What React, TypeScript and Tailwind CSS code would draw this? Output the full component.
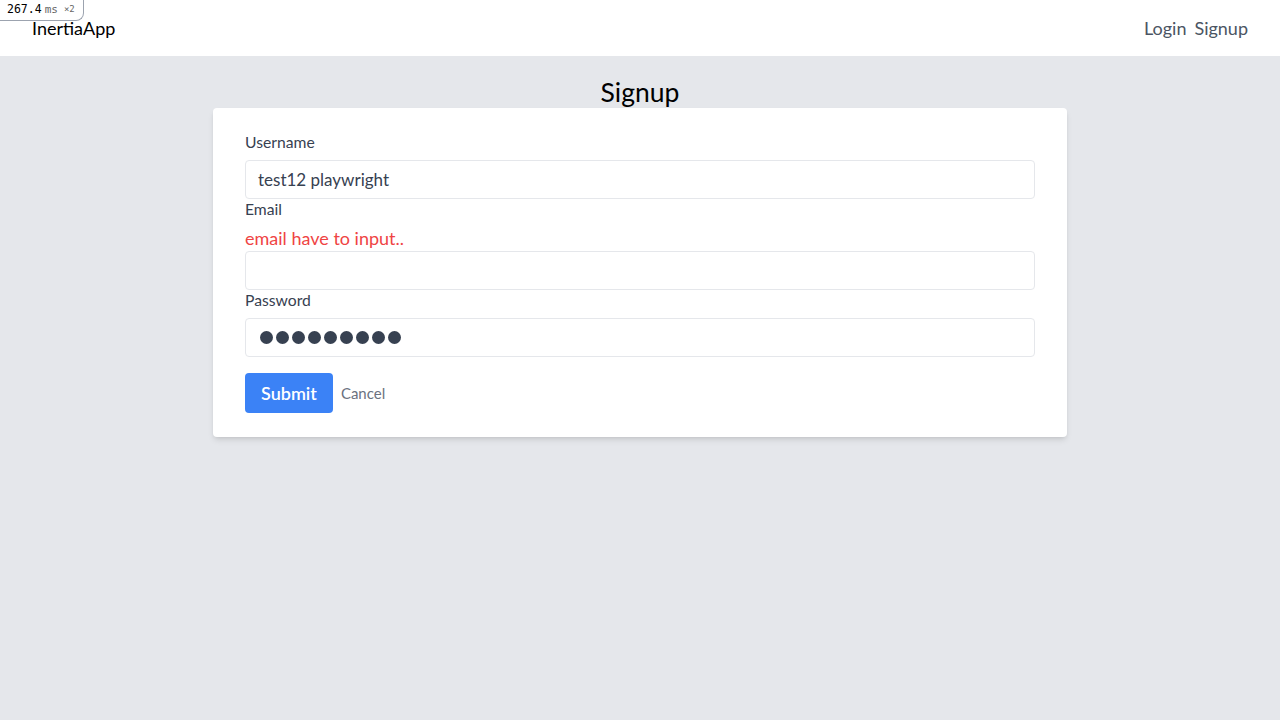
import React from "react";

export default function App() {
  const font = { fontFamily: 'Lato, "Noto Sans", sans-serif' };
  return (
    <div className="min-h-[720px] bg-[#e5e7eb] relative" style={font}>
      <div className="absolute left-0 top-0 h-[21px] w-[84px] border border-[#9ca3af] border-t-0 border-l-0 rounded-br-[8px] bg-white flex items-center pl-[7px] z-10" style={{ fontFamily: '"DejaVu Sans Mono", monospace' }}>
        <span className="text-[11.5px] text-black">267.4</span>
        <span className="ml-[3px] text-[11px] text-[#666]">ms</span>
        <span className="ml-[6px] text-[9px] text-[#666]">×2</span>
      </div>
      <nav className="h-14 bg-white flex items-center justify-between px-8">
        <span className="text-[18px] text-black">InertiaApp</span>
        <div className="flex gap-2 text-[18px] text-[#4b5563]">
          <span>Login</span>
          <span>Signup</span>
        </div>
      </nav>
      <main className="pt-5 flex flex-col items-center">
        <h1 className="text-[26.5px] leading-8 text-black">Signup</h1>
        <div className="w-[854px] bg-white rounded shadow-md px-8 py-6">
          <label className="block text-[15.7px] leading-5 text-[#374151]">Username</label>
          <div className="mt-2 h-[39px] border border-[#e5e7eb] rounded flex items-center px-3 text-[17px] text-[#374151]">
            test12 playwright
          </div>
          <label className="block text-[15.7px] leading-5 text-[#374151]">Email</label>
          <div className="mt-[6px] text-[18px] leading-[26px] text-[#ef4444]">email have to input..</div>
          <div className="h-[39px] border border-[#e5e7eb] rounded"></div>
          <label className="block text-[15.7px] leading-5 text-[#374151]">Password</label>
          <div className="mt-2 h-[39px] border border-[#e5e7eb] rounded flex items-center pl-[14px] gap-[3px]">
            {Array.from({ length: 9 }).map((_, i) => (
              <span key={i} className="w-[13px] h-[13px] rounded-full bg-[#374151]"></span>
            ))}
          </div>
          <div className="mt-4 flex items-center gap-2">
            <button className="h-10 px-4 bg-[#3b82f6] text-white text-[18px] font-semibold rounded">Submit</button>
            <span className="text-[15px] text-[#6b7280]">Cancel</span>
          </div>
        </div>
      </main>
    </div>
  );
}
